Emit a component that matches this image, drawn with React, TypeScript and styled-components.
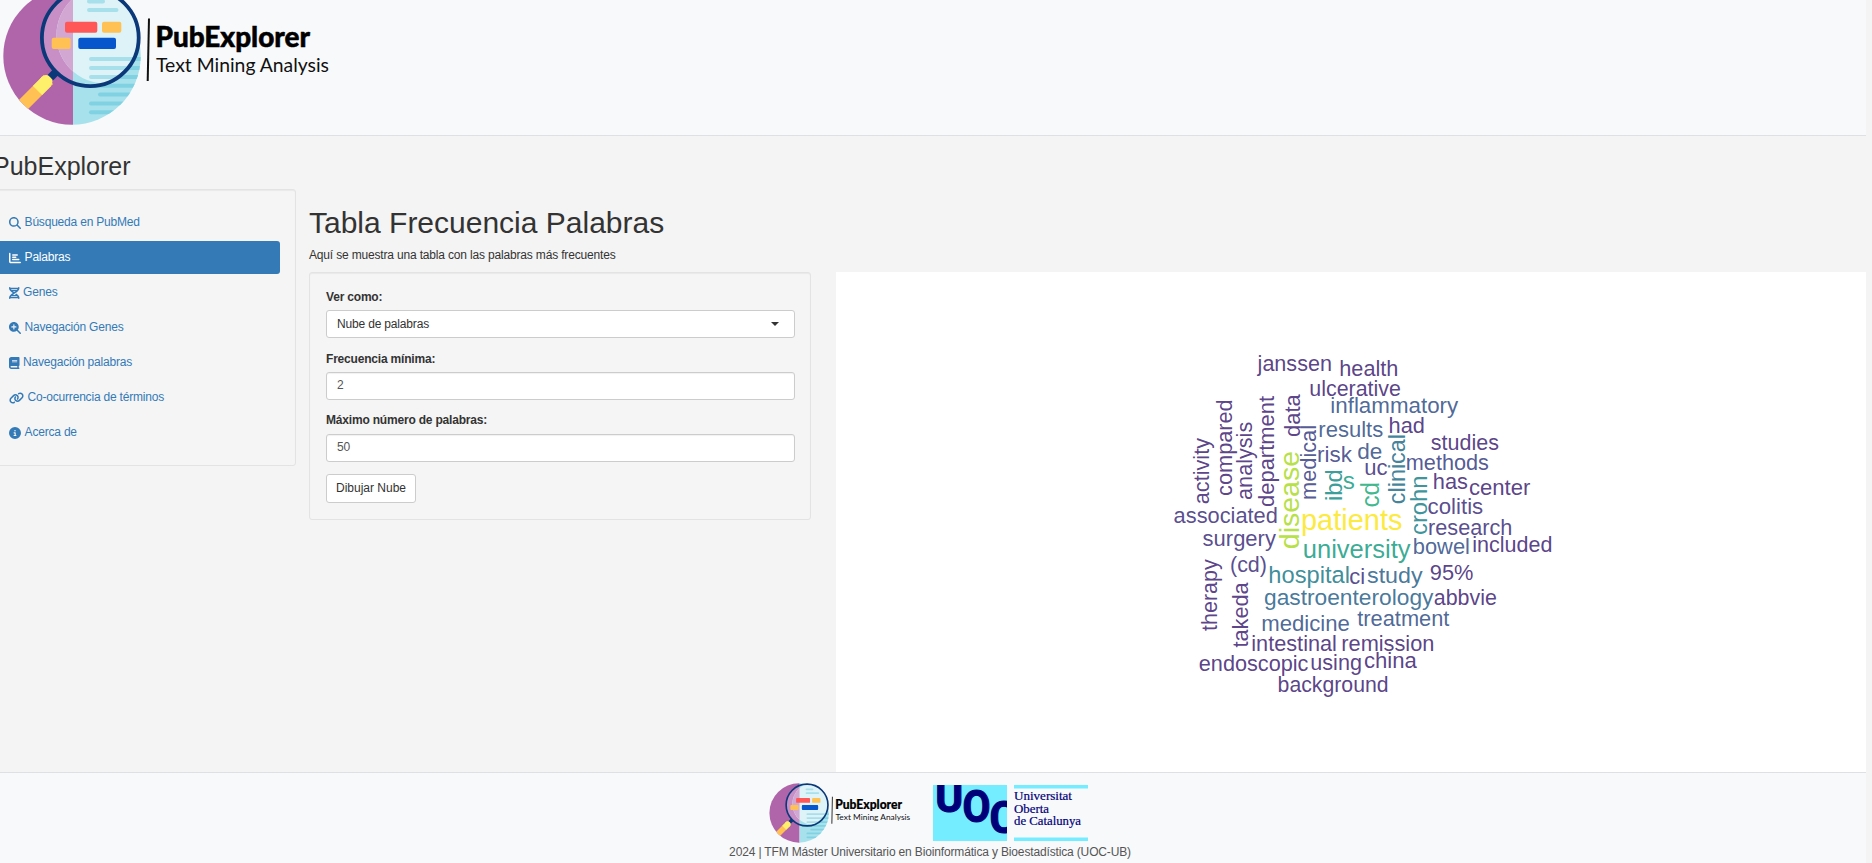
import React from 'react';
import styled, { createGlobalStyle } from 'styled-components';
import {
  FaMagnifyingGlass,
  FaChartBar,
  FaDna,
  FaMagnifyingGlassPlus,
  FaBook,
  FaLink,
  FaCircleInfo,
} from 'react-icons/fa6';

const GlobalStyle = createGlobalStyle`
  *, *::before, *::after { box-sizing: border-box; }
  html, body { margin: 0; height: 100%; overflow: hidden; }
  body {
    background: #f4f4f4;
    color: #333;
    font: 12px/17px "Liberation Sans", Arial, sans-serif;
  }
`;

const Page = styled.div`
  width: 1866px;
  height: 863px;
  display: flex;
  flex-direction: column;
`;

const Header = styled.header`
  height: 136px;
  flex: none;
  overflow: hidden;
  background: #f8f9fb;
  border-bottom: 1px solid #dee0e4;
`;

const HeaderLogo = styled.div`
  margin-top: -20px;
  svg { display: block; }
`;

const Body = styled.div`
  height: 636px;
  flex: none;
  display: flex;
`;

const Side = styled.div`
  width: 309px;
  flex: none;
`;

const AppTitle = styled.h2`
  margin: 17px 0 12px -7px;
  font-size: 25px;
  line-height: 27px;
  font-weight: 400;
  height: 24px;
  white-space: nowrap;
`;

const Well = styled.div`
  border: 1px solid #e3e3e3;
  border-radius: 3px;
  background: #f5f5f5;
  box-shadow: inset 0 1px 1px rgba(0, 0, 0, 0.05);
`;

const NavWell = styled(Well)`
  width: 311px;
  height: 277px;
  margin-left: -15px;
  padding: 16px 15px 15px 0;
`;

const NavItem = styled.a<{ $active?: boolean }>`
  display: flex;
  align-items: center;
  height: 33px;
  margin-bottom: 2px;
  padding-left: 23.3px;
  gap: 3.3px;
  border-radius: 3px;
  letter-spacing: -0.2px;
  white-space: nowrap;
  color: ${(p) => (p.$active ? '#fff' : '#337ab7')};
  background: ${(p) => (p.$active ? '#337ab7' : 'transparent')};
`;

const NavIcon = styled.span<{ $width: number }>`
  display: flex;
  flex: none;
  width: ${(p) => p.$width}px;
  height: 12px;
  svg { width: 100%; height: 100%; }
`;

const Main = styled.main`
  flex: 1;
  display: flex;
  flex-direction: column;
`;

const PageTitle = styled.h1`
  margin: 70px 0 0;
  font-size: 30px;
  line-height: 34px;
  font-weight: 400;
`;

const Lead = styled.p`
  margin: 7px 0 8px;
  letter-spacing: -0.17px;
`;

const Columns = styled.div`
  flex: 1;
  display: flex;
  justify-content: space-between;
`;

const FormWell = styled(Well)`
  width: 502px;
  height: 248px;
  padding: 16px 15px 15px 16px;
`;

const Field = styled.div`
  height: 61.6px;
`;

const Label = styled.label`
  display: block;
  height: 21.4px;
  font-weight: 700;
  letter-spacing: -0.19px;
`;

const Control = styled.div`
  height: 28px;
  display: flex;
  align-items: center;
  justify-content: space-between;
  padding: 0 15px 0 10px;
  border: 1px solid #ccc;
  border-radius: 3px;
  background: #fff;
  box-shadow: inset 0 1px 1px rgba(0, 0, 0, 0.06);
  color: #555;
  letter-spacing: -0.17px;
`;

const Select = styled(Control)`
  color: #333;
  box-shadow: none;
`;

const Caret = styled.span`
  border: 4px solid transparent;
  border-top-color: #333;
  border-bottom: 0;
`;

const Button = styled.button`
  display: block;
  height: 29px;
  width: 90px;
  margin-top: 0;
  padding: 0;
  font: inherit;
  color: #333;
  background: #fff;
  border: 1px solid #ccc;
  border-radius: 3px;
`;

const Plot = styled.div`
  width: 1030px;
  height: 500px;
  background: #fff;
  svg { display: block; }
`;

const Footer = styled.footer`
  flex: 1;
  border-top: 1px solid #dee0e4;
  background: #f8f9fb;
  display: flex;
  flex-direction: column;
  align-items: center;
`;

const FooterLogos = styled.div`
  display: flex;
  width: 322px;
  height: 71px;
  padding-top: 7px;
  margin-right: 9px;
  justify-content: space-between;
  align-items: flex-start;
`;

const UocSlot = styled.div`
  padding-top: 5px;
  svg { display: block; }
`;

const FooterText = styled.div`
  color: #555;
  white-space: nowrap;
  margin-right: 6px;
  letter-spacing: -0.15px;
`;

const docLines: [number, number, number][] = [
  [91, 59, 160],
  [91, 68, 160],
  [91, 77, 160],
  [91, 85.8, 160],
  [100, 94.6, 160],
  [91, 103.4, 160],
  [91, 112.3, 160],
];

function ExplorerLogo({ id, width, height }: { id: string; width: number; height: number }) {
  return (
    <svg width={width} height={height} viewBox="0 -20 340 150">
      <defs>
        <clipPath id={`${id}-disc`}>
          <circle cx="72" cy="56" r="68.7" />
        </clipPath>
        <clipPath id={`${id}-lens`}>
          <circle cx="90.3" cy="37.7" r="49" />
        </clipPath>
      </defs>
      <g clipPath={`url(#${id}-disc)`}>
        <rect x="0" y="-20" width="73" height="150" fill="#b065ab" />
        <rect x="73" y="-20" width="75" height="150" fill="#a7e1ec" />
        <g stroke="#80d2e2" strokeWidth="4" strokeLinecap="round">
          {docLines.map(([x1, y, x2]) => (
            <line key={y} x1={x1} y1={y} x2={x2} y2={y} />
          ))}
        </g>
        <path d="M48.5 79.5L10 118" stroke="#ffc153" strokeWidth="13" />
        <path d="M46.5 81.5L37.5 90.5" stroke="#fff06c" strokeWidth="13" />
        <circle cx="46" cy="81.5" r="6.4" fill="#fff06c" />
        <path d="M58 70L50.5 77.5" stroke="#0b3878" strokeWidth="8" />
      </g>
      <g clipPath={`url(#${id}-lens)`}>
        <rect x="40" y="-20" width="33" height="110" fill="#c78fc6" />
        <rect x="73" y="-20" width="70" height="110" fill="#a7e1ec" />
        <circle cx="105" cy="35" r="48.5" fill="#ddf3f8" />
        <path d="M73 -1.5A48.5 48.5 0 0 0 73 71.5Z" fill="#d2a8d2" />
        <g stroke="#a7e0eb" strokeWidth="4" strokeLinecap="round">
          <path d="M89 1.5H103M89 10H116.5M91 59H160M91 68H160M91 77H160" />
        </g>
        <rect x="65" y="21.7" width="32.3" height="11" rx="2" fill="#ff5757" />
        <rect x="102" y="21.7" width="19.3" height="11" rx="2" fill="#ffc153" />
        <rect x="51.7" y="37.7" width="19" height="11.3" rx="2" fill="#ffc153" />
        <rect x="78.3" y="37.7" width="37.7" height="11.3" rx="2" fill="#0756cb" />
      </g>
      <circle cx="90.3" cy="37.7" r="48.4" fill="none" stroke="#0b3878" strokeWidth="3.8" />
      <path d="M149 18.5L147.7 81" stroke="#111" strokeWidth="2" />
      <text
        x="155.5"
        y="47.3"
        fontFamily="Lato, sans-serif"
        fontWeight="900"
        fontSize="28.5"
        textLength="154.5"
        lengthAdjust="spacingAndGlyphs"
        fill="#000"
        stroke="#000"
        strokeWidth="0.5"
      >
        PubExplorer
      </text>
      <text
        x="156"
        y="71.7"
        fontFamily="Lato, sans-serif"
        fontSize="19"
        textLength="173"
        lengthAdjust="spacingAndGlyphs"
        fill="#111"
      >
        Text Mining Analysis
      </text>
    </svg>
  );
}

function UocLogo() {
  const letter = {
    fontFamily: 'Roboto, sans-serif',
    fontWeight: 700,
    fontSize: 45,
    fill: '#000078',
    stroke: '#000078',
    strokeWidth: 1.2,
    textAnchor: 'middle' as const,
    lengthAdjust: 'spacingAndGlyphs' as const,
  };
  const line = {
    x: 81,
    fontFamily: '"Liberation Serif", serif',
    fontSize: 12.5,
    fill: '#000078',
    stroke: '#000078',
    strokeWidth: 0.2,
    lengthAdjust: 'spacingAndGlyphs' as const,
  };
  return (
    <svg width="157" height="57" viewBox="0 0 157 57">
      <defs>
        <clipPath id="uoc-box">
          <rect width="74" height="56" />
        </clipPath>
      </defs>
      <rect width="74" height="56" fill="#73edff" />
      <g clipPath="url(#uoc-box)">
        <text {...letter} x="16.2" y="27" textLength="28">U</text>
        <text {...letter} x="43.6" y="37.3" textLength="28">O</text>
        <text {...letter} x="70.6" y="48.3" textLength="28">C</text>
      </g>
      <rect x="81" y="0" width="74" height="3.5" fill="#73edff" />
      <rect x="81" y="52.5" width="74" height="3.5" fill="#73edff" />
      <text {...line} y="15.2" textLength="58">Universitat</text>
      <text {...line} y="27.6" textLength="35">Oberta</text>
      <text {...line} y="40" textLength="67">de Catalunya</text>
    </svg>
  );
}

/* text, start and end along the reading direction, baseline, font size, colour */
type Word = [string, number, number, number, number, string];

const P = '#472c7a';
const I = '#453781';
const N = '#404688';
const B = '#39568c';
const S = '#31688e';

const across: Word[] = [
  ['janssen', 1258.3, 1331, 370.5, 21.3, P],
  ['health', 1340, 1397.5, 376, 21.3, P],
  ['ulcerative', 1310, 1400, 395.3, 21.3, P],
  ['inflammatory', 1331, 1457.3, 412.5, 22.2, B],
  ['results', 1319, 1382.3, 436.5, 22, B],
  ['had', 1389.3, 1424, 432.5, 21.3, P],
  ['risk', 1317.7, 1351, 461.7, 21.7, N],
  ['de', 1358, 1381.5, 458.3, 22, B],
  ['uc', 1365, 1386.7, 474.5, 21.5, I],
  ['studies', 1431.5, 1498, 449.5, 21.3, P],
  ['methods', 1406.5, 1488, 469.3, 21.7, N],
  ['has', 1433.5, 1467, 488.3, 21.3, P],
  ['center', 1469.7, 1529.5, 494.5, 21.3, P],
  ['colitis', 1428.3, 1482.3, 513.3, 21.5, I],
  ['research', 1428.7, 1511.5, 534.5, 21.5, I],
  ['bowel', 1413.5, 1469, 553.7, 22, B],
  ['included', 1473, 1551.5, 551.7, 21.3, P],
  ['95%', 1430.5, 1472.5, 579.5, 21.3, P],
  ['associated', 1174.3, 1277, 522.5, 21.5, I],
  ['surgery', 1203.3, 1275, 545.7, 21.5, I],
  ['patients', 1301.7, 1401.5, 529.3, 29, '#fde725'],
  ['university', 1303.5, 1409.7, 557.5, 25.4, '#1fa187'],
  ['(cd)', 1230.7, 1266, 571.2, 21.5, I],
  ['hospital', 1269, 1349, 582.7, 23.7, '#277f8e'],
  ['ci', 1350, 1364.3, 583.3, 21.5, I],
  ['study', 1367.7, 1421.7, 582.7, 22.6, S],
  ['gastroenterology', 1264.7, 1432.5, 604.7, 22.6, S],
  ['abbvie', 1434.5, 1496, 604.7, 21.3, P],
  ['medicine', 1262, 1349, 631, 22.1, B],
  ['treatment', 1358, 1448.5, 626, 22, B],
  ['intestinal', 1252, 1336, 651, 21.3, P],
  ['remission', 1342, 1433.5, 651, 21.3, P],
  ['endoscopic', 1199.5, 1307.5, 670.7, 21.3, P],
  ['using', 1311, 1361, 670, 21.3, P],
  ['china', 1364.7, 1416, 667.3, 21.3, P],
  ['background', 1278.3, 1387.7, 691.3, 21.3, P],
  ['s', 1343.5, 1354, 488.3, 24.5, '#1fa187'],
];

const upward: Word[] = [
  ['activity', 503.3, 438.7, 1208.5, 21.3, P],
  ['compared', 495, 400, 1231.5, 21.3, P],
  ['analysis', 499, 422.5, 1252, 21.3, P],
  ['department', 506, 396.7, 1273.7, 21.3, P],
  ['data', 436, 395, 1300, 21.3, P],
  ['medical', 499, 425.7, 1316, 21.8, N],
  ['disease', 548.3, 451.7, 1298.7, 28.4, '#addc30'],
  ['ibd', 500, 470, 1341.5, 24, '#21918c'],
  ['cd', 506.7, 482.7, 1378.7, 25, '#28ae80'],
  ['clinical', 503.3, 434.7, 1405.3, 23.2, '#2c738e'],
  ['crohn', 534, 476.3, 1427.3, 23.7, '#24868e'],
  ['therapy', 630, 560, 1217, 21.3, P],
  ['takeda', 646.7, 583, 1248, 21.3, P],
];

function WordCloud() {
  return (
    <svg
      width="1030"
      height="500"
      viewBox="836 272 1030 500"
      fontFamily='"Liberation Sans", Arial, sans-serif'
      fillOpacity="0.9"
    >
      {across.map(([t, a, b, y, size, fill]) => (
        <text
          key={t}
          x={a - 0.7}
          y={y + 0.4}
          fontSize={size}
          fill={fill}
          textLength={b - a + 1.6}
          lengthAdjust="spacingAndGlyphs"
        >
          {t}
        </text>
      ))}
      {upward.map(([t, a, b, x, size, fill]) => (
        <text
          key={t}
          transform={`translate(${x} ${a + 0.9}) rotate(-90)`}
          fontSize={size}
          fill={fill}
          textLength={a - b + 1.6}
          lengthAdjust="spacingAndGlyphs"
        >
          {t}
        </text>
      ))}
    </svg>
  );
}

const navItems = [
  { label: 'Búsqueda en PubMed', Icon: FaMagnifyingGlass, width: 12 },
  { label: 'Palabras', Icon: FaChartBar, width: 12, active: true },
  { label: 'Genes', Icon: FaDna, width: 10.5 },
  { label: 'Navegación Genes', Icon: FaMagnifyingGlassPlus, width: 12 },
  { label: 'Navegación palabras', Icon: FaBook, width: 10.5 },
  { label: 'Co-ocurrencia de términos', Icon: FaLink, width: 15 },
  { label: 'Acerca de', Icon: FaCircleInfo, width: 12 },
];

export default function App() {
  return (
    <>
      <GlobalStyle />
      <Page>
        <Header>
          <HeaderLogo>
            <ExplorerLogo id="head" width={340} height={150} />
          </HeaderLogo>
        </Header>
        <Body>
          <Side>
            <AppTitle>PubExplorer</AppTitle>
            <NavWell as="nav">
              {navItems.map(({ label, Icon, width, active }) => (
                <NavItem key={label} $active={active}>
                  <NavIcon $width={width}>
                    <Icon />
                  </NavIcon>
                  {label}
                </NavItem>
              ))}
            </NavWell>
          </Side>
          <Main>
            <PageTitle>Tabla Frecuencia Palabras</PageTitle>
            <Lead>Aquí se muestra una tabla con las palabras más frecuentes</Lead>
            <Columns>
              <FormWell>
                <Field>
                  <Label>Ver como:</Label>
                  <Select>
                    Nube de palabras
                    <Caret />
                  </Select>
                </Field>
                <Field>
                  <Label>Frecuencia mínima:</Label>
                  <Control>2</Control>
                </Field>
                <Field>
                  <Label>Máximo número de palabras:</Label>
                  <Control>50</Control>
                </Field>
                <Button>Dibujar Nube</Button>
              </FormWell>
              <Plot>
                <WordCloud />
              </Plot>
            </Columns>
          </Main>
        </Body>
        <Footer>
          <FooterLogos>
            <ExplorerLogo id="foot" width={147} height={65} />
            <UocSlot>
              <UocLogo />
            </UocSlot>
          </FooterLogos>
          <FooterText>2024 | TFM Máster Universitario en Bioinformática y Bioestadística (UOC-UB)</FooterText>
        </Footer>
      </Page>
    </>
  );
}
